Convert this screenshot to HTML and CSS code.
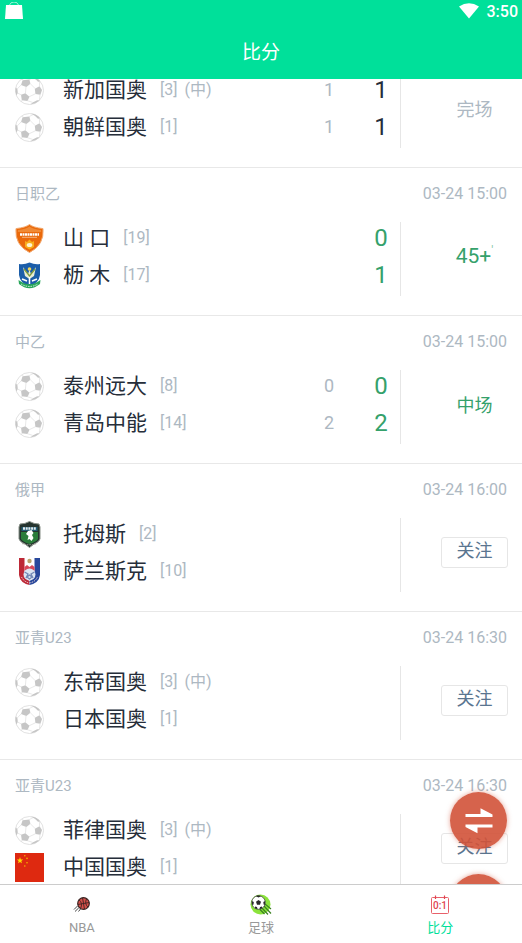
FILE: index.html
```html
<!DOCTYPE html>
<html lang="zh-CN">
<head>
  <meta charset="UTF-8" />
  <meta name="viewport" content="width=device-width, initial-scale=1" />
  <title>比分</title>
  <link rel="stylesheet" href="styles.css">
</head>
<body>
  <!-- shared icons -->
  <svg class="sprite" aria-hidden="true">
    <symbol id="ball" viewBox="0 0 29 29">
      <circle cx="14.5" cy="14.5" r="14" fill="#fff" stroke="#d9d9d9" stroke-width="0.8" />
      <g fill="#c6c6c6">
        <path d="M7.6 4.2L14.4 3.4L15.4 7.8L11.4 11L6 9Z" />
        <path d="M19.8 12.8L24.6 10.2L27 14L25.4 18.8L20.4 18Z" />
        <path d="M6 18.800L10.400 17.200L14.400 20.800L12.600 25L6.800 24.200Z" />
        <path d="M16 .6Q22 1.4 25.4 5.4L23 5.8Q20.4 2.8 16 .6Z" />
        <path d="M.5 11.4L2.4 13L2.8 17L1.4 19.4Q0 15.4 .5 11.4Z" />
        <path d="M15.600 28.400Q21 27.800 24.600 24.600L22.200 24.200L17.600 26.400Z" />
      </g>
      <g fill="none" stroke="#dedede" stroke-width="0.7">
        <path d="M15.2 7.600L20.200 12.600M11 10.600L10.400 17.600M6.400 8.600L2.200 13M8 4.200L7.200 2.600M14.200 3.600L18 1.600M24.600 10.600L24.400 5.400M20.800 17.600L14 20.800M25 18.400L24.400 24.400M6.400 19L2.600 17M7.200 24L6 26M12.200 24.600L17.600 26.400" />
      </g>
    </symbol>
  </svg>

  <!-- Header Start -->
  <header class="header">
    <div class="status-bar">
      <svg width="20" height="18" viewBox="0 0 20 18">
        <path d="M2 3H18L19 17H1Z" fill="#fff" />
        <path d="M5.500 3Q6.500 0 10 0Q13.500 0 14.500 3" fill="none" stroke="#fff" stroke-opacity=".6" />
      </svg>
      <div class="status-right">
        <svg width="20" height="16" viewBox="0 0 20 16">
          <path d="M0 3.500Q10 -3 20 3.500L10 15.500Z" fill="#fff" />
        </svg>
        <span class="clock">3:50</span>
      </div>
    </div>
    <h1>比分</h1>
  </header>
  <!-- Header End -->

  <main class="scores">
    <div class="match-list">
      <section class="match">
        <div class="match-body">
          <div class="teams">
            <div class="team">
              <svg class="crest"><use href="#ball" /></svg>
              <span class="name">新加国奥</span><span class="rank">[3]</span><span class="rank">(中)</span>
              <span class="half">1</span><span class="score">1</span>
            </div>
            <div class="team">
              <svg class="crest"><use href="#ball" /></svg>
              <span class="name">朝鲜国奥</span><span class="rank">[1]</span>
              <span class="half">1</span><span class="score">1</span>
            </div>
          </div>
          <div class="state"><span>完场</span></div>
        </div>
      </section>

      <section class="match live">
        <div class="match-head"><span>日职乙</span><time>03-24 15:00</time></div>
        <div class="match-body">
          <div class="teams">
            <div class="team">
              <svg class="crest" viewBox="0 0 29 29">
                <path d="M14.500 .5Q18 3.400 28 4.600Q29.500 21 14.500 28.500Q-.5 21 1 4.600Q11 3.400 14.500 .5Z" fill="#ea690b" stroke="#f3ab72" />
                <path d="M14.500 2.500Q18 5 26 6L26.200 8H2.800L3 6Q11 5 14.500 2.500Z" fill="#f08a35" />
                <path d="M5 10.500H24" stroke="#fff" stroke-width="2.600" stroke-dasharray="2 .5" />
                <path d="M7 13.300H22" stroke="#f7c79f" stroke-width=".8" />
                <path d="M10 17L12 18L14.500 15.500L17 18L19 17V23L14.500 25.500L10 23Z" fill="#f8ad1c" />
                <ellipse cx="14.500" cy="21" rx="2.800" ry="2" fill="#fff3d0" />
              </svg>
              <span class="name">山 口</span><span class="rank">[19]</span>
              <span class="half"></span><span class="score">0</span>
            </div>
            <div class="team">
              <svg class="crest" viewBox="0 0 29 29">
                <path d="M4 3Q9 4 14.500 1.500Q20 4 25 3V14Q24 22 14.500 26Q5 22 4 14Z" fill="#1c5ea9" />
                <path d="M8 6L13 13L14.500 9L16 13L21 6L19 15L14.500 18L10 15Z" fill="#e9eed4" />
                <path d="M9 8L14.500 15L20 8" fill="none" stroke="#7f9b3d" stroke-width="1.300" />
                <circle cx="14.500" cy="8" r="1.800" fill="#efd65a" />
                <path d="M7 18L12 20M22 18L17 20M14.500 16V23" stroke="#fff" stroke-width="1.500" />
                <path d="M3.500 19Q14.500 27.500 25.500 19L25 23Q14.500 31.500 4 23Z" fill="#28a65a" />
                <path d="M6 23Q14.500 28 23 23" fill="none" stroke="#d8f0df" stroke-width="1" stroke-dasharray="1.500 1" />
              </svg>
              <span class="name">枥 木</span><span class="rank">[17]</span>
              <span class="half"></span><span class="score">1</span>
            </div>
          </div>
          <div class="state"><span class="minute">45+<sup>'</sup></span></div>
        </div>
      </section>

      <section class="match live">
        <div class="match-head"><span>中乙</span><time>03-24 15:00</time></div>
        <div class="match-body">
          <div class="teams">
            <div class="team">
              <svg class="crest"><use href="#ball" /></svg>
              <span class="name">泰州远大</span><span class="rank">[8]</span>
              <span class="half">0</span><span class="score">0</span>
            </div>
            <div class="team">
              <svg class="crest"><use href="#ball" /></svg>
              <span class="name">青岛中能</span><span class="rank">[14]</span>
              <span class="half">2</span><span class="score">2</span>
            </div>
          </div>
          <div class="state"><span>中场</span></div>
        </div>
      </section>

      <section class="match">
        <div class="match-head"><span>俄甲</span><time>03-24 16:00</time></div>
        <div class="match-body">
          <div class="teams">
            <div class="team">
              <svg class="crest" viewBox="0 0 29 29">
                <path d="M5 4Q10 4 14.500 1.500Q19 4 24 4L25 7V19Q24 22 19 24L14.500 27.500L10 24Q5 22 4 19V7Z" fill="#25342f" stroke="#889088" />
                <path d="M6 12H23V19Q21 22 14.500 24Q8 22 6 19Z" fill="#2a7d3a" />
                <path d="M6.500 7H22.500V11H6.500Z" fill="#225c74" />
                <path d="M8 8.500H21" stroke="#e5edf0" stroke-width="2.500" stroke-dasharray="2 .7" />
                <path d="M13 11L16.500 10L18.500 13L17 15L18.500 18L16.500 21L14.500 19L12.500 20L13.500 16L11 14Z" fill="#fff" />
                <path d="M7 23.500Q14.500 26 22 23.500" fill="none" stroke="#a3a39a" stroke-dasharray="1.500 1" />
              </svg>
              <span class="name">托姆斯</span><span class="rank">[2]</span>
            </div>
            <div class="team">
              <svg class="crest" viewBox="0 0 29 29">
                <path d="M4 1H25V18Q24 26 14.500 28Q5 26 4 18Z" fill="#fff" />
                <path d="M4 1H9.500V20L14.500 24V28Q5 26 4 18Z" fill="#bd2937" />
                <path d="M25 1H19.500V20L14.500 24V28Q24 26 25 18Z" fill="#28489b" />
                <circle cx="14.500" cy="4" r="2.200" fill="#bca36c" />
                <path d="M9.500 10L12 8L14.500 10L17 8L19.500 10V14H9.500Z" fill="#d84859" />
                <circle cx="14.500" cy="17.500" r="6" fill="#dbe5f2" />
                <path d="M9.500 15L13 17L11 21M19.500 15L16 17L18 21M12 20L14.500 18L17 20L14.500 22Z" fill="none" stroke="#7188b5" stroke-width="1.300" />
                <path d="M6.500 20Q9 25 14.500 26Q20 25 22.500 20" fill="none" stroke="#f1dadd" stroke-dasharray="1.500 1" />
              </svg>
              <span class="name">萨兰斯克</span><span class="rank">[10]</span>
            </div>
          </div>
          <div class="state"><button class="follow" type="button">关注</button></div>
        </div>
      </section>

      <section class="match">
        <div class="match-head"><span>亚青U23</span><time>03-24 16:30</time></div>
        <div class="match-body">
          <div class="teams">
            <div class="team">
              <svg class="crest"><use href="#ball" /></svg>
              <span class="name">东帝国奥</span><span class="rank">[3]</span><span class="rank">(中)</span>
            </div>
            <div class="team">
              <svg class="crest"><use href="#ball" /></svg>
              <span class="name">日本国奥</span><span class="rank">[1]</span>
            </div>
          </div>
          <div class="state"><button class="follow" type="button">关注</button></div>
        </div>
      </section>

      <section class="match">
        <div class="match-head"><span>亚青U23</span><time>03-24 16:30</time></div>
        <div class="match-body">
          <div class="teams">
            <div class="team">
              <svg class="crest"><use href="#ball" /></svg>
              <span class="name">菲律国奥</span><span class="rank">[3]</span><span class="rank">(中)</span>
            </div>
            <div class="team">
              <svg class="crest" viewBox="0 0 29 29">
                <path d="M0 0H29V29H0Z" fill="#de2910" />
                <path d="M5 4L5.800 6.400H8.200L6.300 7.900L7 10.300L5 8.900L3 10.300L3.700 7.900L1.800 6.400H4.200Z" fill="#ffde00" />
                <g fill="#f5b400">
                  <circle cx="9.800" cy="2.800" r=".8" />
                  <circle cx="12" cy="5.400" r=".8" />
                  <circle cx="12" cy="9.800" r=".8" />
                  <circle cx="9.800" cy="13" r=".8" />
                </g>
              </svg>
              <span class="name">中国国奥</span><span class="rank">[1]</span>
            </div>
          </div>
          <div class="state"><button class="follow" type="button">关注</button></div>
        </div>
      </section>
    </div>

    <!-- floating buttons over the list -->
    <div class="fabs">
      <button class="fab" type="button">
        <svg width="28" height="26" viewBox="0 0 28 26">
          <path d="M.5 6H15.500V.2L27.500 6.500V9H.5ZM27.500 16.500H.5V19L12.500 25.300V19.500H27.500Z" fill="#fff" />
        </svg>
      </button>
      <button class="fab" type="button"></button>
    </div>
  </main>

  <!-- Tab bar Start -->
  <nav class="tabbar">
    <a class="tab" href="#nba">
      <svg width="22" height="22" viewBox="0 0 22 22">
        <circle cx="12.500" cy="9.500" r="5.800" fill="#d7504a" stroke="#3a2422" stroke-width="1.200" />
        <path d="M6.700 10.500L18.300 8.500M11.500 3.700L13.500 15.300M8 5.800Q12 9 9.600 14.600M15.600 4.500Q13.200 10 17 13.200" fill="none" stroke="#3a2422" stroke-width=".9" />
        <path d="M6.500 12L3 15.500M7.800 13.800L4 17.500M9.500 15L7.500 17.500" stroke="#333" stroke-width=".9" />
      </svg>
      NBA
    </a>
    <a class="tab" href="#football">
      <svg width="22" height="22" viewBox="0 0 22 22">
        <circle cx="10.500" cy="10.500" r="10" fill="#8be33b" />
        <path d="M15 10L21 15M14 12L21 19.500M12 14L18 20.500M10 15.500L14.500 20" stroke="#3b8222" stroke-width="1.200" />
        <circle cx="8.500" cy="8.500" r="6.800" fill="#fff" stroke="#333" stroke-width=".7" />
        <g fill="#292929">
          <path d="M8.500 6L11 7.800L10 10.800H7L6 7.800Z" />
          <path d="M6 2.200L8.500 3.400L11 2.200L9 1.600H7.500Z" />
          <path d="M1.800 7L3.800 8L3.500 10.500L2.200 11Z" />
          <path d="M15.200 7L13.300 8L13.600 10.500L14.800 11Z" />
          <path d="M5 12.500L7 13L7.500 15.200L5 14.200ZM12 12.500L10 13L9.500 15.200L12 14.200Z" />
        </g>
      </svg>
      足球
    </a>
    <a class="tab active" href="#score">
      <svg width="22" height="22" viewBox="0 0 22 22">
        <path d="M3.500 3.500H18.500Q19.500 3.500 19.500 4.500V18.500Q19.500 19.500 18.500 19.500H3.500Q2.500 19.500 2.500 18.500V4.500Q2.500 3.500 3.500 3.500Z" fill="none" stroke="#e8606a" />
        <path d="M6.500 1.500V5M15.500 1.500V5" stroke="#e04450" stroke-width="1.200" />
        <text x="11" y="15" text-anchor="middle" class="icon-text">0:1</text>
      </svg>
      比分
    </a>
  </nav>
  <!-- Tab bar End -->
</body>
</html>
```

FILE: styles.css
```css
* {
  box-sizing: border-box;
}
body {
  margin: 0;
  height: 100vh;
  display: flex;
  flex-direction: column;
  overflow: hidden;
  background: #fff;
  color: #262e3a;
  font-family: Roboto, 'Noto Sans CJK SC', sans-serif;
}
button {
  font-family: inherit;
  padding: 0;
  cursor: pointer;
}
.sprite {
  display: none;
}

/* Header styles */
.header {
  flex: none;
  background: #00e09a;
  color: #fff;
}
.status-bar {
  height: 22px;
  padding: 0 4px;
  display: flex;
  align-items: center;
  justify-content: space-between;
}
.status-right {
  display: flex;
  align-items: center;
  gap: 8px;
}
.clock {
  font-size: 16px;
  font-weight: 500;
}
h1 {
  margin: 0;
  padding-top: 4px;
  font-size: 19px;
  font-weight: 400;
  line-height: 53px;
  text-align: center;
}

/* Match list */
.scores {
  flex: 1;
  min-height: 0;
  position: relative;
  overflow: hidden;
}
.match-list {
  margin-top: -5px; /* list is scrolled a little */
}
.match {
  padding-bottom: 19px;
  border-bottom: 1px solid #e8e8e8;
}
.match-head {
  height: 54px;
  padding: 0 15px;
  display: flex;
  justify-content: space-between;
  font-size: 16px;
  line-height: 52px;
  color: #adb8c2;
}
.match-head span {
  font-size: 15px;
}
.match-body {
  display: flex;
  height: 74px;
}
.teams {
  flex: 1;
  padding-left: 15px;
  border-right: 1px solid #e6e6e6;
}
.team {
  height: 37px;
  padding-bottom: 5px;
  display: flex;
  align-items: center;
  line-height: 30px;
}
.crest {
  width: 29px;
  height: 29px;
  margin-right: 19px;
}
.name {
  font-size: 21px;
  margin-right: 13px;
}
.rank {
  font-size: 16px;
  color: #adb8c2;
  margin-right: 7px;
}
.half {
  margin-left: auto;
  width: 20px;
  font-size: 18px;
  text-align: center;
  color: #adb8c2;
}
.score {
  width: 20px;
  margin: 0 9px 0 32px;
  font-size: 24px;
  line-height: 20px;
  text-align: center;
}
.state {
  width: 121px;
  padding: 0 14px 6px 40px;
  display: flex;
  align-items: center;
  justify-content: center;
  font-size: 18px;
  color: #adb8c2;
}
.minute {
  font-size: 21px;
}
.minute sup {
  font-size: 12px;
  opacity: 0.6;
}
.live .score,
.live .state {
  color: #35a16b;
}
.follow {
  width: 67px;
  height: 31px;
  padding-bottom: 4px;
  border: 1px solid #e6e6e6;
  border-radius: 3px;
  background: #fff;
  color: #5a7590;
  font-size: 18px;
  line-height: 26px;
}

/* Floating buttons */
.fabs {
  position: absolute;
  right: 15px;
  bottom: -47px;
  display: flex;
  flex-direction: column;
  gap: 25px;
}
.fab {
  width: 57px;
  height: 57px;
  display: flex;
  align-items: center;
  justify-content: center;
  border: none;
  border-radius: 50%;
  background: rgba(210, 82, 56, 0.9);
  box-shadow: 0 0 5px rgba(210, 82, 56, 0.5);
}

/* Tab bar */
.tabbar {
  flex: none;
  height: 59px;
  padding: 9px 13% 0;
  display: flex;
  justify-content: space-between;
  border-top: 1px solid #ccc;
}
.tab {
  width: 28px;
  display: flex;
  flex-direction: column;
  align-items: center;
  gap: 3px;
  font-size: 13px;
  line-height: 18px;
  color: #999;
  text-decoration: none;
  white-space: nowrap;
}
.tab.active {
  color: #00e09a;
}
.icon-text {
  font-size: 10px;
  font-weight: 500;
  fill: #e04450;
}
```
